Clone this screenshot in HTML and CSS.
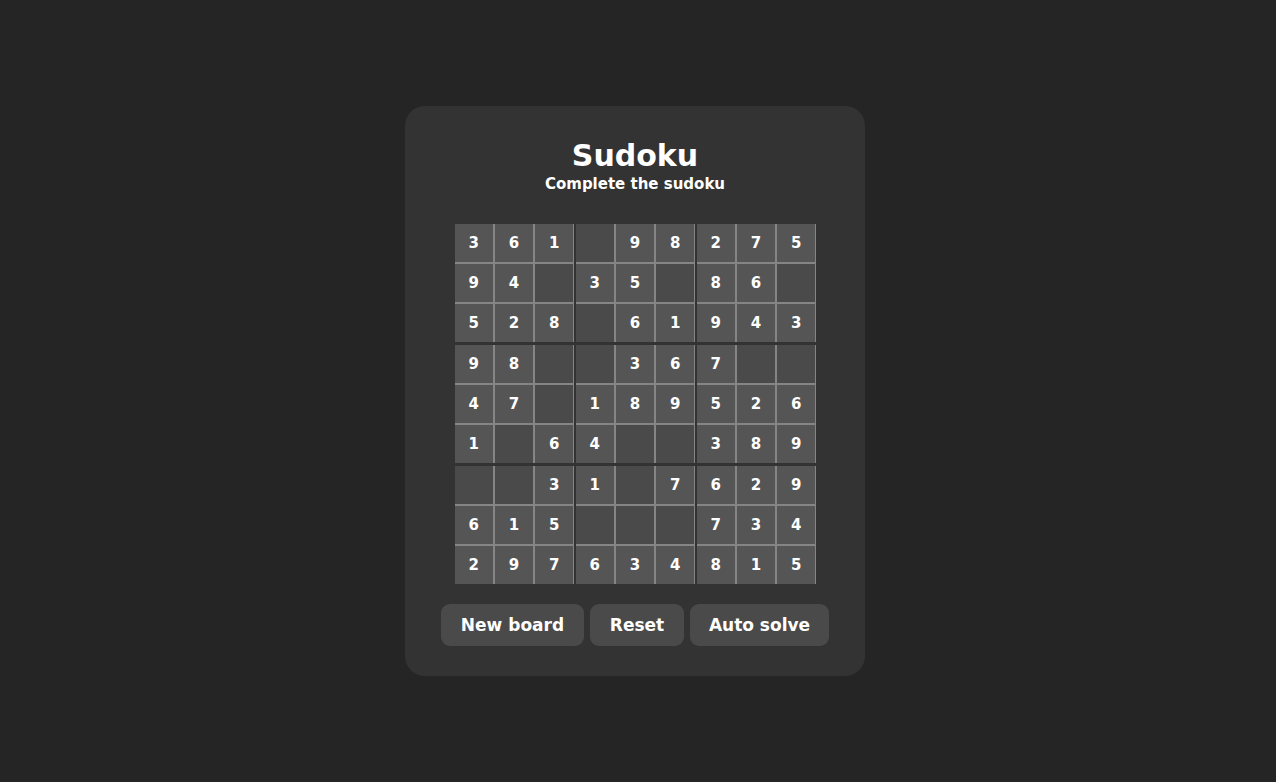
FILE: index.html
```html
<!DOCTYPE html>
<html>
<head>
<meta charset="utf-8">
<link rel="stylesheet" href="styles.css">
</head>
<body>
<div class="page">
  <div class="card">
    <h1 class="title">Sudoku</h1>
    <p class="subtitle">Complete the sudoku</p>
    <div class="board">
      <div class="box"><div class="cell">3</div><div class="cell">6</div><div class="cell">1</div><div class="cell">9</div><div class="cell">4</div><div class="cell empty"></div><div class="cell">5</div><div class="cell">2</div><div class="cell">8</div></div>
      <div class="box"><div class="cell empty"></div><div class="cell">9</div><div class="cell">8</div><div class="cell">3</div><div class="cell">5</div><div class="cell empty"></div><div class="cell empty"></div><div class="cell">6</div><div class="cell">1</div></div>
      <div class="box"><div class="cell">2</div><div class="cell">7</div><div class="cell">5</div><div class="cell">8</div><div class="cell">6</div><div class="cell empty"></div><div class="cell">9</div><div class="cell">4</div><div class="cell">3</div></div>
      <div class="box"><div class="cell">9</div><div class="cell">8</div><div class="cell empty"></div><div class="cell">4</div><div class="cell">7</div><div class="cell empty"></div><div class="cell">1</div><div class="cell empty"></div><div class="cell">6</div></div>
      <div class="box"><div class="cell empty"></div><div class="cell">3</div><div class="cell">6</div><div class="cell">1</div><div class="cell">8</div><div class="cell">9</div><div class="cell">4</div><div class="cell empty"></div><div class="cell empty"></div></div>
      <div class="box"><div class="cell">7</div><div class="cell empty"></div><div class="cell empty"></div><div class="cell">5</div><div class="cell">2</div><div class="cell">6</div><div class="cell">3</div><div class="cell">8</div><div class="cell">9</div></div>
      <div class="box"><div class="cell empty"></div><div class="cell empty"></div><div class="cell">3</div><div class="cell">6</div><div class="cell">1</div><div class="cell">5</div><div class="cell">2</div><div class="cell">9</div><div class="cell">7</div></div>
      <div class="box"><div class="cell">1</div><div class="cell empty"></div><div class="cell">7</div><div class="cell empty"></div><div class="cell empty"></div><div class="cell empty"></div><div class="cell">6</div><div class="cell">3</div><div class="cell">4</div></div>
      <div class="box"><div class="cell">6</div><div class="cell">2</div><div class="cell">9</div><div class="cell">7</div><div class="cell">3</div><div class="cell">4</div><div class="cell">8</div><div class="cell">1</div><div class="cell">5</div></div>
    </div>
    <div class="actions">
      <button class="btn btn-new">New board</button>
      <button class="btn btn-reset">Reset</button>
      <button class="btn btn-solve">Auto solve</button>
    </div>
  </div>
</div>
</body>
</html>
```
FILE: styles.css
```css
* { box-sizing: border-box; }
html, body {
  margin: 0;
  padding: 0;
  background: #252525;
}
body {
  font-family: "DejaVu Sans", "Noto Sans", sans-serif;
  color: #ffffff;
}
.page {
  width: 1276px;
  height: 782px;
  padding-right: 6px;
  display: flex;
  align-items: center;
  justify-content: center;
}
.card {
  width: 460px;
  height: 570px;
  background: #333333;
  border-radius: 20px;
  padding-top: 31px;
  display: flex;
  flex-direction: column;
  align-items: center;
}
.title {
  margin: 0;
  font-size: 30px;
  line-height: 38px;
  font-weight: bold;
}
.subtitle {
  margin: 0;
  font-size: 15px;
  line-height: 18px;
  font-weight: bold;
}
.board {
  margin-top: 31px;
  display: grid;
  grid-template-columns: repeat(3, 119px);
  grid-template-rows: repeat(3, 118px);
  column-gap: 2px;
  row-gap: 3px;
}
.box {
  display: grid;
  grid-template-columns: repeat(3, 1fr);
  grid-template-rows: repeat(3, 1fr);
  gap: 2px;
  background: #858585;
}
.cell {
  background: #555555;
  display: flex;
  align-items: center;
  justify-content: center;
  font-size: 15px;
  font-weight: bold;
}
.cell.empty {
  background: #4a4a4a;
}
.actions {
  margin-top: 20px;
  display: flex;
  gap: 6px;
}
.btn {
  height: 42px;
  border: none;
  border-radius: 9px;
  background: #4a4a4a;
  color: #ffffff;
  font-family: "DejaVu Sans", "Noto Sans", sans-serif;
  font-weight: bold;
  font-size: 17px;
  padding: 0;
}
.btn-new { width: 143px; }
.btn-reset { width: 94px; }
.btn-solve { width: 139px; }
```
